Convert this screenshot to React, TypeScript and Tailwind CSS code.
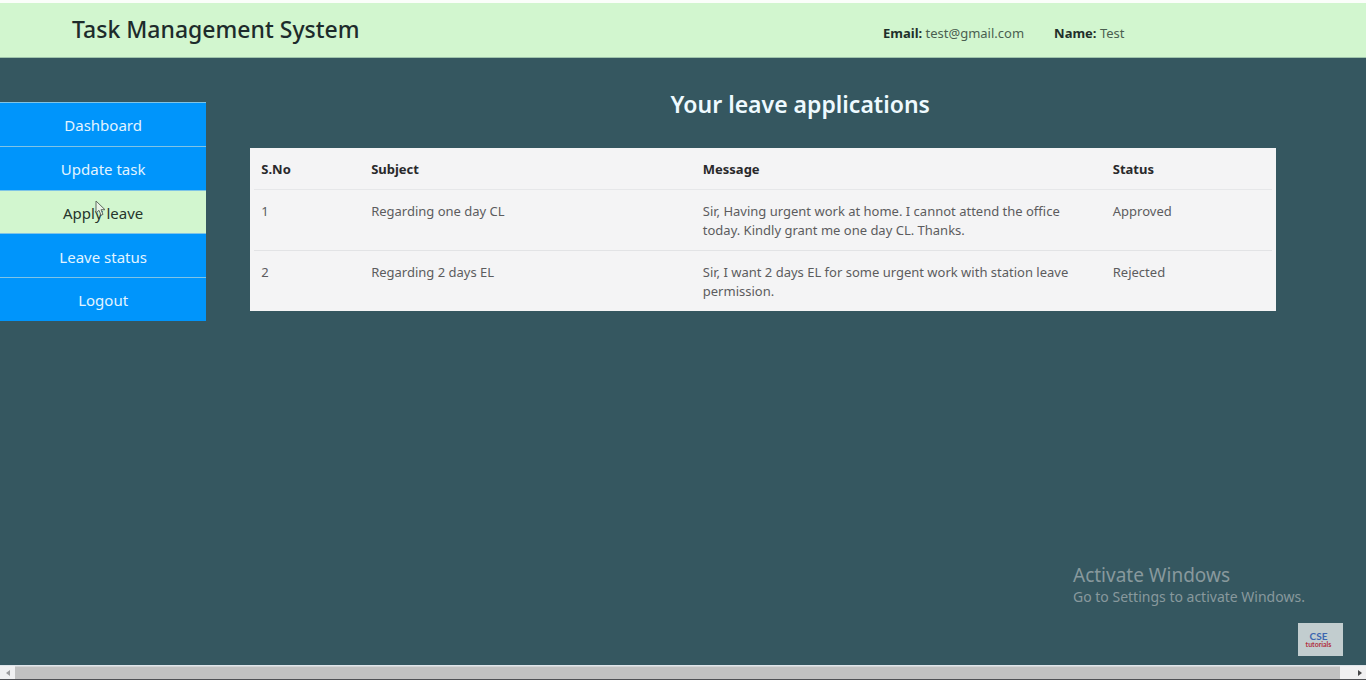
const NAV_ITEMS = ["Dashboard", "Update task", "Apply leave", "Leave status", "Logout"];

const LEAVES = [
  {
    id: 1,
    subject: "Regarding one day CL",
    message:
      "Sir, Having urgent work at home. I cannot attend the office today. Kindly grant me one day CL. Thanks.",
    status: "Approved",
  },
  {
    id: 2,
    subject: "Regarding 2 days EL",
    message: "Sir, I want 2 days EL for some urgent work with station leave permission.",
    status: "Rejected",
  },
];

function Header() {
  return (
    <header className="flex h-[58px] items-center border-t-[3px] border-b border-t-[#fbfefa] border-b-[#9fc5ac] bg-[#d2f6cf] pl-[72px] text-[#1d2b2b]">
      <h1 className="w-[811px] pb-0.5 text-[23px] font-medium">Task Management System</h1>
      <div className="flex gap-[30px] pt-2 text-[13px] text-[#4a5f50]">
        <span>
          <b className="text-[#1f2f2a]">Email:</b> test@gmail.com
        </span>
        <span>
          <b className="text-[#1f2f2a]">Name:</b> Test
        </span>
      </div>
    </header>
  );
}

function Sidebar() {
  return (
    <nav className="mt-11 w-[15.1%] shrink-0 self-start">
      <ul className="grid h-[219px] auto-rows-fr">
        {NAV_ITEMS.map((item) => (
          <li key={item} className="border-t border-[#7fc4e6]">
            <a
              href="#"
              className={
                item === "Apply leave"
                  ? "flex h-full items-center justify-center bg-[#d2f6cf] pt-0.5 text-[15px] text-[#26352c]"
                  : "flex h-full items-center justify-center bg-[#0095fb] pt-0.5 text-[15px] text-[#e2f4ff]"
              }
            >
              {item}
            </a>
          </li>
        ))}
      </ul>
    </nav>
  );
}

function LeaveTable() {
  return (
    <div className="mt-[26px] w-[91.9%] bg-[#f4f4f5] px-1">
      <table className="w-full table-fixed text-left align-top text-[13px] leading-[19px] text-[#5c5c5e]">
        <thead className="text-[#29292b]">
          <tr className="border-b border-[#e6e7e9]">
            <th className="w-[10.8%] px-[7px] pt-3 pb-2.5">S.No</th>
            <th className="w-[32.6%] px-[7px] pt-3 pb-2.5">Subject</th>
            <th className="w-[40.3%] px-[7px] pt-3 pb-2.5">Message</th>
            <th className="px-[7px] pt-3 pb-2.5">Status</th>
          </tr>
        </thead>
        <tbody>
          {LEAVES.map((leave) => (
            <tr key={leave.id} className="border-b border-[#e2e3e5] align-top last:border-b-0">
              <td className="px-[7px] pt-3 pb-2.5">{leave.id}</td>
              <td className="px-[7px] pt-3 pb-2.5">{leave.subject}</td>
              <td className="px-[7px] pt-3 pb-2.5">{leave.message}</td>
              <td className="px-[7px] pt-3 pb-2.5">{leave.status}</td>
            </tr>
          ))}
        </tbody>
      </table>
    </div>
  );
}

function ScrollBar() {
  return (
    <div className="flex h-[15px] border-t border-b border-t-[#dfe5ea] border-b-[#4f5054] bg-[#f0f0f1]">
      <button aria-label="Scroll left" className="flex w-[15px] items-center justify-center">
        <svg width="4" height="6" viewBox="0 0 4 6" fill="#9b9b9d">
          <path d="M4 0v6L0 3z" />
        </svg>
      </button>
      <div className="flex-1 border-t border-[#d4d5d6] bg-[#c1c1c1]" />
      <button aria-label="Scroll right" className="flex w-[26px] items-center justify-end pr-1">
        <svg width="4" height="6" viewBox="0 0 4 6" fill="#454547">
          <path d="M0 0v6l4-3z" />
        </svg>
      </button>
    </div>
  );
}

export default function App() {
  return (
    <div className="relative flex min-h-screen flex-col bg-[#355760] font-['Noto_Sans','Open_Sans',sans-serif]">
      <Header />
      <div className="flex flex-1">
        <Sidebar />
        <main className="flex-1 pt-7 pl-11">
          <h2 className="w-[1100px] max-w-full text-center text-[23px] leading-[36px] font-semibold text-[#eefaff]">
            Your leave applications
          </h2>
          <LeaveTable />
        </main>
      </div>
      <ScrollBar />

      <svg className="absolute top-[200px] left-[95px]" width="11" height="17" viewBox="0 0 11 17">
        <path
          d="M1 1v12l3-2.7 2 5 2-.9-2-4.7h4z"
          fill="#e9f4e7"
          stroke="#5e6b60"
          strokeWidth="1"
        />
      </svg>
      <div className="absolute right-[57px] bottom-[73px] w-[236px] whitespace-nowrap text-[#88999d]">
        <p className="text-[19px] leading-[24px]">Activate Windows</p>
        <p className="text-sm leading-[20px]">Go to Settings to activate Windows.</p>
      </div>
      <div className="absolute right-[23px] bottom-6 flex h-[33px] w-[45px] flex-col items-center justify-center bg-[#c2cdcf] pr-1 font-['Lato',sans-serif] font-bold">
        <span className="text-[10px] leading-[9px] text-[#3c66b0]">CSE</span>
        <span className="text-[7px] leading-[7px] text-[#b0303f]">tutorials</span>
      </div>
    </div>
  );
}
